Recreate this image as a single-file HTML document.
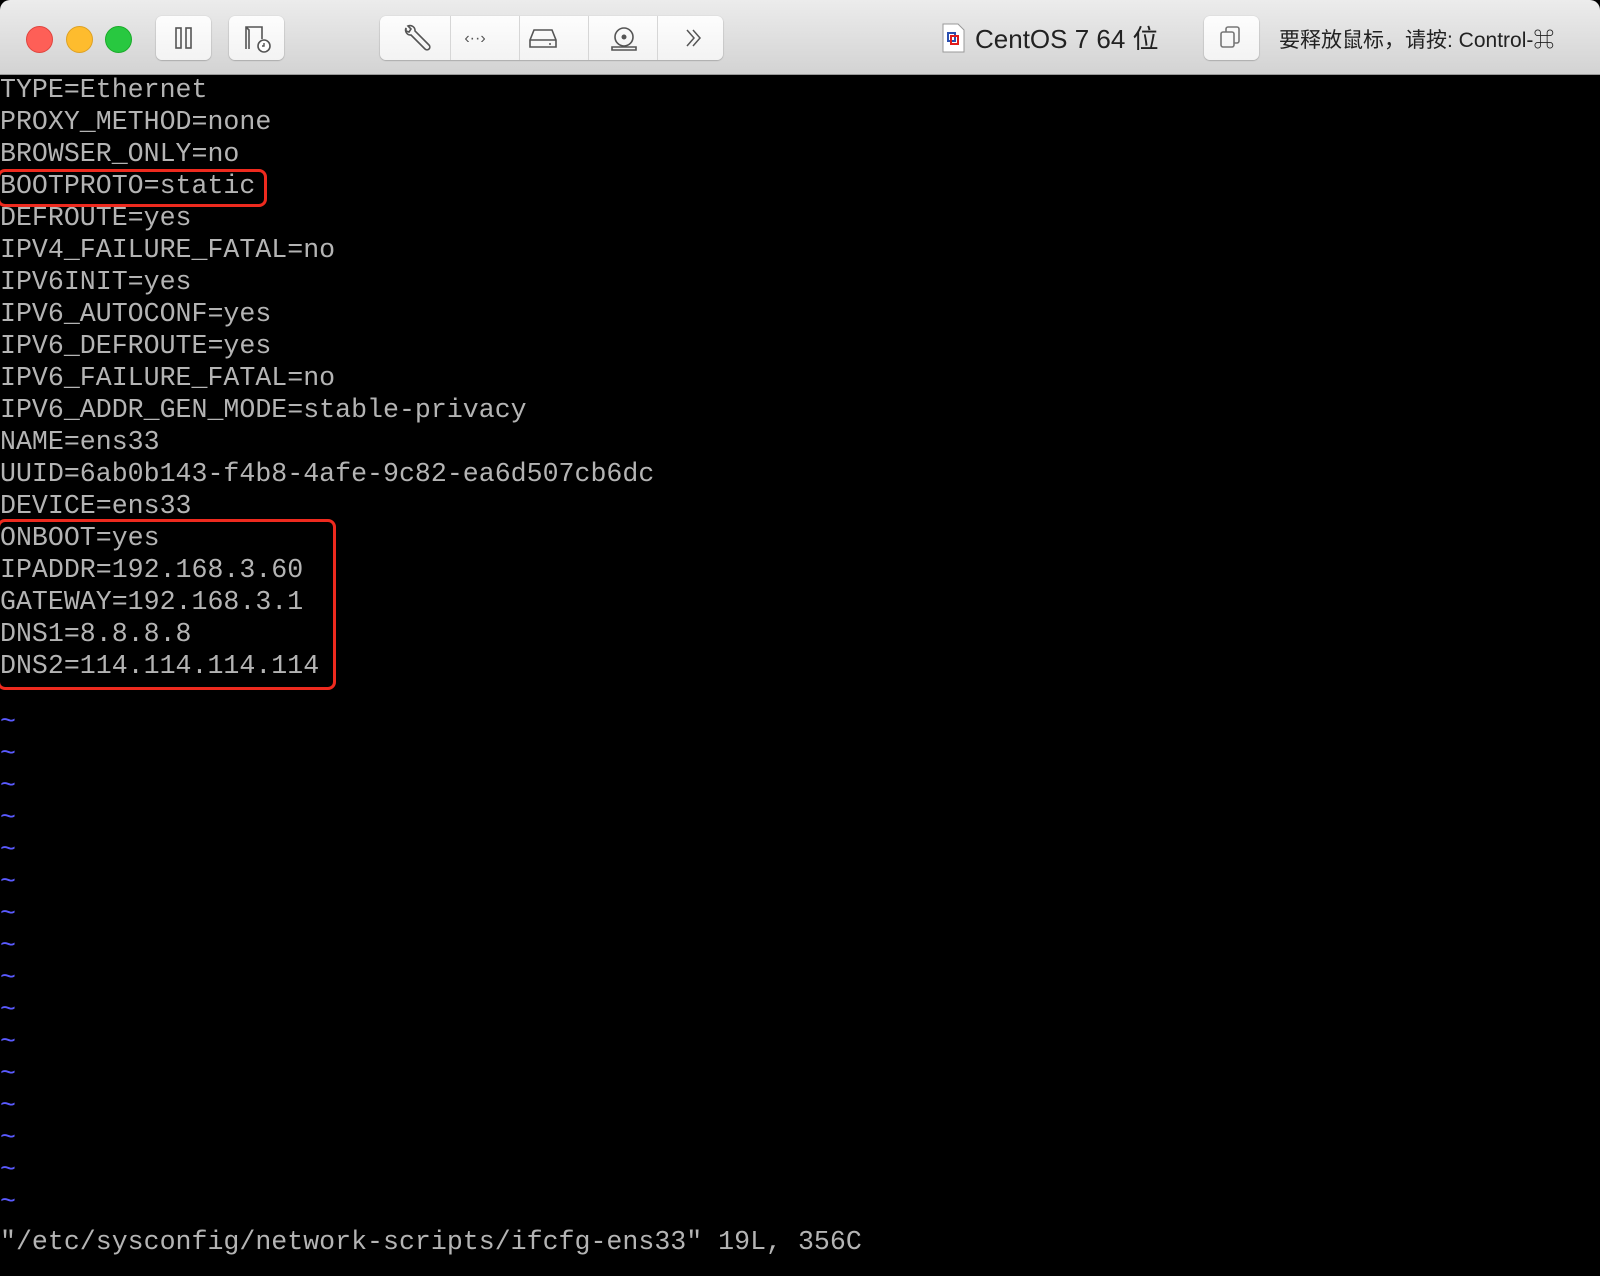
<!DOCTYPE html>
<html><head><meta charset="utf-8"><style>
html,body{margin:0;padding:0;width:1600px;height:1276px;overflow:hidden;background:#000}
.tb{position:absolute;left:0;top:0;width:1600px;height:74px;background:linear-gradient(#ececec,#d3d3d3);border-bottom:1px solid #9a9a9a;border-radius:10px 10px 0 0}
.dot{position:absolute;top:26px;width:25px;height:25px;border-radius:50%}
.btn{position:absolute;top:16px;height:44px;background:linear-gradient(#fdfdfd,#f3f3f3);border-radius:6px;box-shadow:0 0.5px 1.5px rgba(0,0,0,.35)}
.seg{position:absolute;top:0;height:44px;border-left:1px solid #d6d6d6}
.term{position:absolute;left:0;top:74px;font-family:"Liberation Mono",monospace;font-size:26.6px;line-height:32px;color:#b4b4b4;white-space:pre}
.t{color:#5a5aff;position:relative;top:24px}
.box{position:absolute;border:3px solid #ee2a1e;border-radius:8px}
.ui{font-family:"Liberation Sans","Noto Sans CJK SC",sans-serif;color:#222;position:absolute}
</style></head><body>
<div class="tb">
<div class="dot" style="left:26px;background:#fe5f57;border:0.5px solid #e0443e"></div>
<div class="dot" style="left:66px;background:#febc2e;border:0.5px solid #dea123"></div>
<div class="dot" style="left:105px;background:#28c840;border:0.5px solid #1aab29"></div>
<div class="btn" style="left:156px;width:55px"><svg width="55" height="44"><rect x="20" y="12" width="5" height="20" fill="none" stroke="#555" stroke-width="1.6"/><rect x="30" y="12" width="5" height="20" fill="none" stroke="#555" stroke-width="1.6"/></svg></div>
<div class="btn" style="left:229px;width:55px"><svg width="55" height="44"><path d="M17 33V11h16v12M17 11l3 3v19" fill="none" stroke="#555" stroke-width="1.6"/><circle cx="35" cy="30" r="6" fill="#fff" stroke="#555" stroke-width="1.6"/><path d="M35 27v3h-2" fill="none" stroke="#555" stroke-width="1.4"/></svg></div>
<div class="btn" style="left:380px;width:343px">
<svg width="343" height="44" style="position:absolute;left:0;top:0">
<path d="M26 12a5 5 0 0 0 5 7l14 14a2.5 2.5 0 0 0 4-4L35 15a5 5 0 0 0-7-5l3 3-2 3-3-1z" fill="none" stroke="#555" stroke-width="1.6"/>
<text x="95" y="27" font-family="Liberation Sans" font-size="16" fill="#555" text-anchor="middle">‹··›</text>
<path d="M150 31v-7l4-10h18l4 10v7zM150 24h26" fill="none" stroke="#555" stroke-width="1.6"/><circle cx="170" cy="28" r="1" fill="#555"/>
<circle cx="244" cy="21" r="9" fill="none" stroke="#555" stroke-width="1.6"/><circle cx="244" cy="21" r="2.5" fill="#555"/><path d="M232 31h24v3h-24z" fill="none" stroke="#555" stroke-width="1.6"/>
<path d="M307 14l7 8-7 8M313 14l7 8-7 8" fill="none" stroke="#555" stroke-width="1.5"/>
</svg>
<div class="seg" style="left:70px"></div><div class="seg" style="left:139px"></div><div class="seg" style="left:208px"></div><div class="seg" style="left:277px"></div>
</div>
<svg style="position:absolute;left:942px;top:23px" width="24" height="30"><path d="M1 1h15l6 6v22H1z" fill="#fff" stroke="#999"/><rect x="6" y="10" width="7" height="8" fill="none" stroke="#2a4fb0" stroke-width="2"/><rect x="9" y="13" width="7" height="8" fill="none" stroke="#e01b1b" stroke-width="2"/></svg>
<div class="ui" style="left:975px;top:19px;font-size:26px">CentOS 7 64 位</div>
<div class="btn" style="left:1204px;width:55px"><svg width="55" height="44"><rect x="17" y="16" width="13" height="15" rx="2" fill="none" stroke="#777" stroke-width="1.6"/><path d="M22 16v-3a2 2 0 0 1 2-2h9a2 2 0 0 1 2 2v12a2 2 0 0 1-2 2h-3" fill="none" stroke="#777" stroke-width="1.6"/></svg></div>
<div class="ui" style="left:1279px;top:24px;font-size:21px">要释放鼠标，请按: Control-⌘</div>
</div>
<div class="term">TYPE=Ethernet
PROXY_METHOD=none
BROWSER_ONLY=no
BOOTPROTO=static
DEFROUTE=yes
IPV4_FAILURE_FATAL=no
IPV6INIT=yes
IPV6_AUTOCONF=yes
IPV6_DEFROUTE=yes
IPV6_FAILURE_FATAL=no
IPV6_ADDR_GEN_MODE=stable-privacy
NAME=ens33
UUID=6ab0b143-f4b8-4afe-9c82-ea6d507cb6dc
DEVICE=ens33
ONBOOT=yes
IPADDR=192.168.3.60
GATEWAY=192.168.3.1
DNS1=8.8.8.8
DNS2=114.114.114.114
<span class="t">~
~
~
~
~
~
~
~
~
~
~
~
~
~
~
~</span>

"/etc/sysconfig/network-scripts/ifcfg-ens33" 19L, 356C</div>
<div class="box" style="left:-3px;top:169px;width:264px;height:32px"></div>
<div class="box" style="left:-3px;top:519px;width:333px;height:165px"></div>
</body></html>
